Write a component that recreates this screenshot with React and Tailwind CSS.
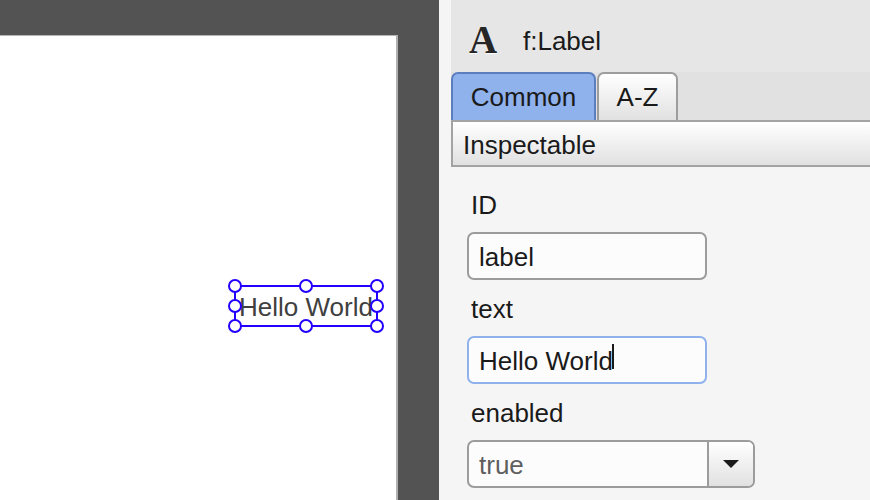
import React from "react";

const HANDLES = [
  "left-0 top-0",
  "left-1/2 top-0",
  "left-full top-0",
  "left-0 top-1/2",
  "left-full top-1/2",
  "left-0 top-full",
  "left-1/2 top-full",
  "left-full top-full",
];

function SelectedLabel() {
  return (
    <div className="absolute top-[250px] right-[19px] h-10 w-[142px]">
      <span className="absolute left-1 top-[5px] whitespace-nowrap leading-8 text-[#404040]">
        Hello World
      </span>
      <div className="absolute -inset-px border-2 border-[#2200ff]" />
      {HANDLES.map((place) => (
        <span
          key={place}
          className={
            "absolute size-[14px] -translate-x-1/2 -translate-y-1/2 rounded-full border-2 border-[#2200ff] bg-white " +
            place
          }
        />
      ))}
    </div>
  );
}

function Canvas() {
  return (
    <main className="flex min-w-0 flex-1 flex-col bg-[#535353] pt-[35px] pr-[41px]">
      <div className="relative flex-1 border-t border-r-2 border-t-[#b5b5b5] border-r-[#b0b0b0] bg-white">
        <SelectedLabel />
      </div>
    </main>
  );
}

const field =
  "block h-12 w-60 rounded-[7px] border-2 bg-[#fcfcfc] px-[10px] pt-[2px] outline-none";

function Inspector() {
  return (
    <aside className="w-[431px] shrink-0 bg-[#f5f5f5] pl-3">
      <header className="flex h-[72px] items-center bg-[#e6e6e6] pt-[10px] pl-[18px]">
        <span
          aria-hidden="true"
          className="w-[54px] pb-[2px] font-['Liberation_Serif',serif] text-[39px] font-bold leading-10 text-[#262626] [text-shadow:0_1px_1px_white]"
        >
          A
        </span>
        <h1>f:Label</h1>
      </header>

      <div role="tablist" className="flex h-12 gap-px bg-[#e1e1e1]">
        <button
          role="tab"
          aria-selected="true"
          className="w-[145px] rounded-t-[7px] border-2 border-b-0 border-[#5b7fbe] bg-[#8fb1ec] pb-px"
        >
          Common
        </button>
        <button
          role="tab"
          aria-selected="false"
          className="w-[81px] rounded-t-[7px] border-2 border-b-0 border-[#9d9d9d] bg-linear-to-b from-white to-[#e1e1e1] pb-px"
        >
          A-Z
        </button>
      </div>

      <h2 className="flex h-[47px] items-center border-2 border-r-0 border-[#a3a3a3] bg-linear-to-b from-white to-[#e1e1e1] pt-[3px] pl-[10px]">
        Inspectable
      </h2>

      <form className="pl-4">
        <label htmlFor="field-id" className="block pt-[22px] pb-[11px] pl-1 leading-8">
          ID
        </label>
        <input id="field-id" defaultValue="label" className={field + " border-[#9c9c9c]"} />

        <label htmlFor="field-text" className="block pt-[13px] pb-[11px] pl-1 leading-8">
          text
        </label>
        <div className="relative w-60">
          <input
            id="field-text"
            defaultValue="Hello World"
            className={field + " border-[#8fb1ec]"}
          />
          <span className="absolute top-2 left-[145px] h-[25px] w-[2px] bg-[#1a1a1a]" />
        </div>

        <label htmlFor="field-enabled" className="block pt-[13px] pb-[11px] pl-1 leading-8">
          enabled
        </label>
        <div className="relative w-72">
          <select
            id="field-enabled"
            defaultValue="true"
            className="block h-12 w-full appearance-none rounded-[7px] border-2 border-[#9c9c9c] bg-[#fcfcfc] px-[10px] pt-[2px] text-[#5f5f5f] outline-none"
          >
            <option>true</option>
            <option>false</option>
          </select>
          <span className="pointer-events-none absolute inset-y-[2px] right-[2px] flex w-[46px] items-center justify-center rounded-r-[5px] border-l-2 border-[#9c9c9c] bg-linear-to-b from-white to-[#e1e1e1]">
            <svg width="16" height="8" viewBox="0 0 16 8" aria-hidden="true">
              <path d="M0 0h16L8 8z" fill="#1a1a1a" />
            </svg>
          </span>
        </div>
      </form>
    </aside>
  );
}

export default function App() {
  return (
    <div className="flex min-h-screen font-['Liberation_Sans',Arial,sans-serif] text-[26px] leading-8 text-[#1a1a1a]">
      <Canvas />
      <Inspector />
    </div>
  );
}
